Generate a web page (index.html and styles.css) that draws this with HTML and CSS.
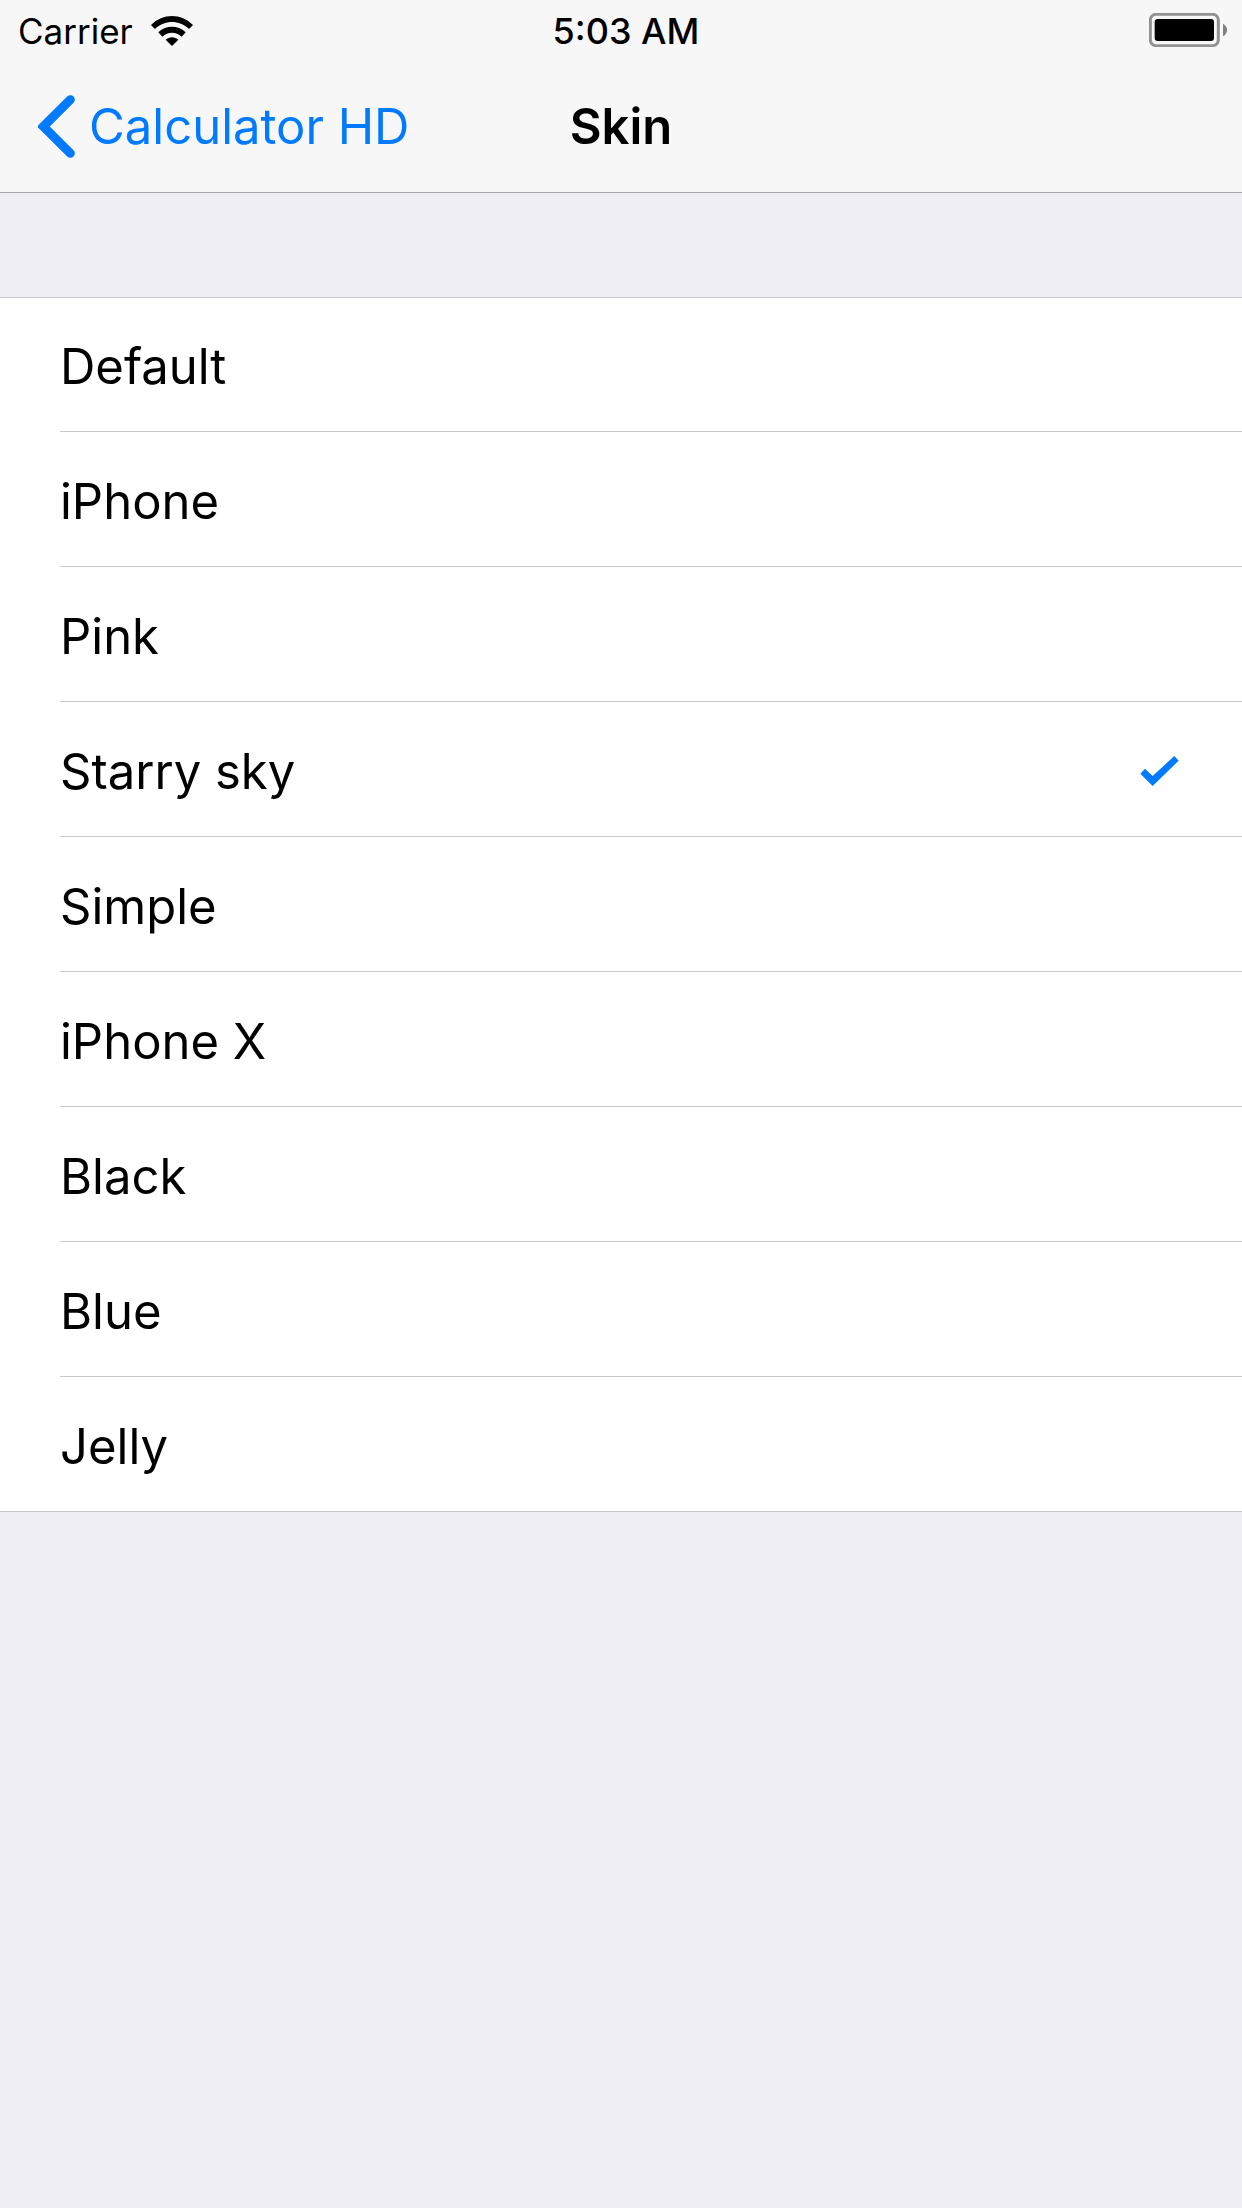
FILE: index.html
```html
<!DOCTYPE html>
<html lang="en">
<head>
    <meta charset="UTF-8">
    <meta name="viewport" content="width=device-width, initial-scale=1.0">
    <title>Skin</title>
    <link rel="stylesheet" href="styles.css">
</head>
<body>
    <header class="top-bar">
        <div class="status-bar">
            <div class="status-left">
                <span>Carrier</span>
                <svg class="wifi" viewBox="0 0 126 90" aria-hidden="true">
                    <path d="M0 27C36-9 90-9 126 27L114 39C85 11 41 11 12 39Z"/>
                    <path d="M22 49C46 27 80 27 104 49L92 62C75 46 51 46 34 62Z"/>
                    <path d="M44 71C55 61 71 61 82 71L63 90Z"/>
                </svg>
            </div>
            <time class="clock">5:03 AM</time>
            <div class="status-right">
                <svg class="battery" viewBox="0 0 234 102" aria-label="Battery full">
                    <rect x="4" y="4" width="204" height="94" rx="17" fill="none" stroke="#929292" stroke-width="9"/>
                    <rect x="17" y="18" width="178" height="66" rx="9" fill="#000"/>
                    <path d="M222 32C238 40 238 62 222 70Z" fill="#808080"/>
                </svg>
            </div>
        </div>
        <nav class="nav-bar">
            <a class="back" href="#">
                <svg class="chevron" viewBox="0 0 111 189" aria-hidden="true">
                    <path d="M97 14L16 94.500L97 175" fill="none" stroke="currentColor" stroke-width="27" stroke-linecap="round"/>
                </svg>
                <span>Calculator HD</span>
            </a>
            <h1 class="title">Skin</h1>
        </nav>
    </header>

    <main>
        <form class="skin-list" id="skins"></form>
    </main>

    <script>
        const skins = ['Default', 'iPhone', 'Pink', 'Starry sky', 'Simple', 'iPhone X', 'Black', 'Blue', 'Jelly'];
        const list = document.getElementById('skins');

        skins.forEach((name, i) => {
            list.insertAdjacentHTML('beforeend', `
                <label class="skin-row" for="skin${i}">
                    <input type="radio" name="skin" id="skin${i}" value="${name}" ${name === 'Starry sky' ? 'checked' : ''}>
                    <span class="skin-name">${name}</span>
                    <svg class="check" viewBox="0 0 115 90" aria-hidden="true">
                        <path d="M0 53L14 38L37 60L102 0L115 14L37 90Z"/>
                    </svg>
                </label>`);
        });
    </script>
</body>
</html>
```
FILE: styles.css
```css
body {
    margin: 0;
    min-height: 100vh;
    background-color: #efeef4;
    color: #000;
    font-family: Inter, "Liberation Sans", sans-serif;
    font-size: 49px;
}

.top-bar {
    background-color: #f7f7f7;
    border-bottom: 1px solid #a7a7ab;
}

.status-bar {
    display: grid;
    grid-template-columns: 1fr auto 1fr;
    align-items: center;
    height: 60px;
    box-sizing: border-box;
    padding: 2px 8px 0 18px;
    font-size: 35px;
}

.status-left {
    display: flex;
    align-items: center;
    gap: 18px;
}

.status-right {
    display: flex;
    justify-content: flex-end;
    padding: 0 7px 2px 0;
}

.clock {
    font-size: 36px;
    font-weight: 500;
}

.wifi {
    width: 42px;
    height: 30px;
}

.battery {
    width: 78px;
    height: 34px;
}

/* Equal side columns keep the title centered */
.nav-bar {
    display: grid;
    grid-template-columns: 1fr auto 1fr;
    align-items: center;
    height: 132px;
    padding: 0 38px;
}

.back {
    display: flex;
    align-items: center;
    gap: 14px;
    color: #007aff;
    text-decoration: none;
}

.chevron {
    width: 37px;
    height: 63px;
}

.title {
    margin: 0;
    font-size: 49px;
    font-weight: 600;
}

.skin-list {
    margin-top: 104px;
    background-color: #fff;
    border-top: 1px solid #c8c7cc;
    border-bottom: 1px solid #c8c7cc;
}

.skin-row {
    position: relative;
    display: flex;
    align-items: center;
    justify-content: space-between;
    height: 133px;
    box-sizing: border-box;
    margin-left: 60px;
    padding: 4px 63px 0 0;
    cursor: pointer;
}

.skin-row + .skin-row {
    border-top: 1px solid #c8c7cc;
    height: 135px;
}

.skin-row input {
    position: absolute;
    opacity: 0;
}

.check {
    width: 39px;
    height: 30px;
    fill: #007aff;
    visibility: hidden;
}

.skin-row input:checked ~ .check {
    visibility: visible;
}
```
